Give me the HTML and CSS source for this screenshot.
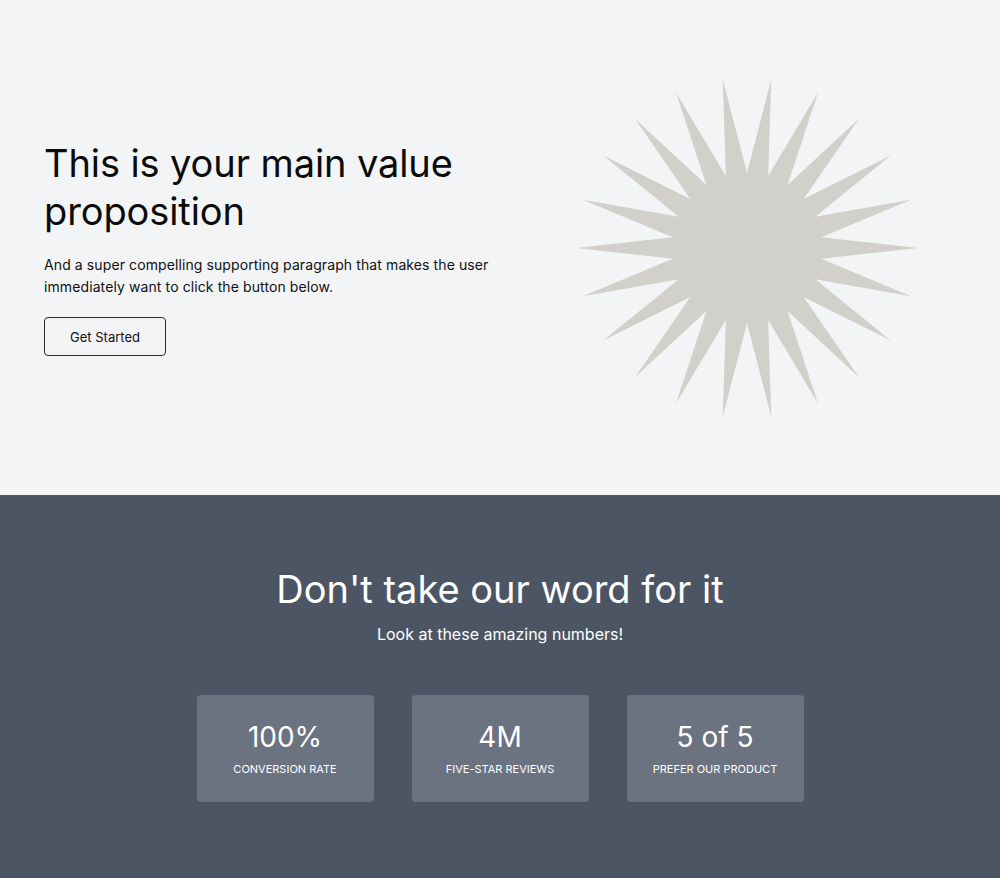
FILE: index.html
```html
<!DOCTYPE html>
<html lang="en">
<head>
<meta charset="utf-8">
<title>Value proposition</title>
<link rel="stylesheet" href="styles.css">
</head>
<body>
<section class="hero">
  <div class="hero-text">
    <h1 class="hero-title">This is your main value proposition</h1>
    <p class="hero-copy">And a super compelling supporting paragraph that makes the user immediately want to click the button below.</p>
    <div><button class="btn" type="button">Get Started</button></div>
  </div>
  <div class="hero-art">
    <svg class="star" width="342" height="342" viewBox="0 0 342 342" aria-hidden="true">
      <polygon fill="#d1d0cb" points="342,171 245.24,160.33 335.07,122.82 239.22,139.84 314.85,78.55 227.68,121.89 282.98,41.77 211.55,107.91 242.04,15.45 192.13,99.04 195.34,1.74 171,96 146.66,1.74 149.87,99.04 99.96,15.45 130.45,107.91 59.02,41.77 114.32,121.89 27.15,78.55 102.78,139.84 6.93,122.82 96.76,160.33 0,171 96.76,181.67 6.93,219.18 102.78,202.16 27.15,263.45 114.32,220.11 59.02,300.23 130.45,234.09 99.96,326.55 149.87,242.96 146.66,340.26 171,246 195.34,340.26 192.13,242.96 242.04,326.55 211.55,234.09 282.98,300.23 227.68,220.11 314.85,263.45 239.22,202.16 335.07,219.18 245.24,181.67"/>
    </svg>
  </div>
</section>
<section class="stats">
  <h2 class="stats-title">Don't take our word for it</h2>
  <p class="stats-sub">Look at these amazing numbers!</p>
  <div class="stat-row">
    <div class="stat-card">
      <div class="stat-num">100%</div>
      <div class="stat-label">CONVERSION RATE</div>
    </div>
    <div class="stat-card">
      <div class="stat-num">4M</div>
      <div class="stat-label">FIVE-STAR REVIEWS</div>
    </div>
    <div class="stat-card">
      <div class="stat-num">5 of 5</div>
      <div class="stat-label">PREFER OUR PRODUCT</div>
    </div>
  </div>
</section>
</body>
</html>
```
FILE: styles.css
```css
* { box-sizing: border-box; }
html, body { margin: 0; padding: 0; }
body {
  font-family: Inter, "Noto Sans", "Liberation Sans", sans-serif;
  color: #111;
  background: #4b5563;
}
.hero {
  display: flex;
  align-items: center;
  height: 495px;
  padding: 0 44px;
  background: #f3f4f6;
}
.hero-text {
  width: 470px;
  display: flex;
  flex-direction: column;
}
.hero-title {
  margin: 0 0 19px;
  font-size: 38px;
  line-height: 48px;
  font-weight: 400;
  letter-spacing: -0.1px;
  color: #0b0b0b;
}
.hero-copy {
  margin: 0 0 19px;
  font-size: 14px;
  letter-spacing: 0.1px;
  line-height: 22px;
  color: #111;
}
.btn {
  font-family: inherit;
  font-size: 13px;
  height: 39px;
  padding: 0 24px;
  width: 122px;
  background: transparent;
  border: 1px solid #2b2b2b;
  border-radius: 4px;
  color: #111;
}
.hero-art {
  flex: 1;
  display: flex;
  justify-content: flex-end;
  padding-right: 38px;
}
.star { display: block; }
.stats {
  padding: 74px 0 76px;
  background: #4b5563;
  color: #fff;
  text-align: center;
}
.stats-title {
  margin: 0;
  font-size: 38px;
  line-height: 40px;
  font-weight: 400;
}
.stats-sub {
  margin: 13px 0 0;
  font-size: 16px;
  line-height: 24px;
}
.stat-row {
  margin-top: 49px;
  display: flex;
  justify-content: center;
  gap: 38px;
}
.stat-card {
  width: 177px;
  height: 107px;
  padding-top: 24px;
  background: #6b7280;
  border-radius: 4px;
}
.stat-num {
  font-size: 28px;
  line-height: 36px;
}
.stat-label {
  margin-top: 6px;
  font-size: 11px;
  line-height: 16px;
}
```
